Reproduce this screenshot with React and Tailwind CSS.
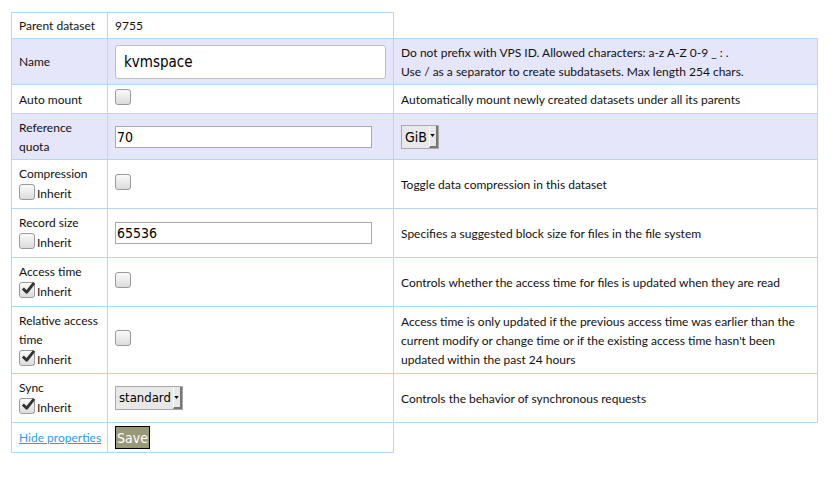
import React from 'react'

const inputFont = "font-['DejaVu_Sans_Condensed','DejaVu_Sans',sans-serif] [font-stretch:condensed]"

const Check = ({ checked, lift }) => (
  <span
    className={
      'inline-block relative w-[16px] h-[16px] rounded-[3px] border border-[#9a9a9a] bg-gradient-to-b from-[#fafafa] to-[#dcdcdc] align-middle' +
      (lift ? ' -top-[3px]' : '')
    }
  >
    {checked && (
      <svg viewBox="0 0 16 16" className="absolute left-[1px] -top-[2px] w-[15px] h-[15px]">
        <path d="M2 8 L6 12 L14 2" fill="none" stroke="#333" strokeWidth="3" strokeLinejoin="round" />
      </svg>
    )}
  </span>
)

const Inherit = ({ checked }) => (
  <div className="flex items-end gap-[2px] leading-[19px] mt-[1px] mb-[4px]">
    <Check checked={checked} />
    <span className="-mb-[3px]">Inherit</span>
  </div>
)

const Select = ({ value, size }) => (
  <span className={'inline-flex items-stretch h-[24px] border border-[#a8a8a8] bg-[#e8e8e8] text-black ' + inputFont + ' ' + size}>
    <span className="pl-[3px] pr-[2px] leading-[22px]">{value}</span>
    <span className="w-[9px] flex items-center justify-center border-l border-white border-r-2 border-r-[#777] border-b-2 border-b-[#777] bg-[#e8e8e8]">
      <svg viewBox="0 0 6 4" className="w-[5px] h-[3px]"><path d="M0 0 H6 L3 4 Z" fill="#111" /></svg>
    </span>
  </span>
)

const Row = ({ label, field, desc, lav, h, noDesc }) => (
  <tr className={lav ? 'bg-[#e6e6fa]' : ''} style={{ height: h }}>
    <td className="border border-[#b3d6fb] px-[7px] align-middle">{label}</td>
    <td className="border border-[#b3d6fb] px-[7px] align-middle">{field}</td>
    {noDesc ? null : <td className="border border-[#b3d6fb] px-[7px] align-middle">{desc}</td>}
  </tr>
)

export default function App() {
  return (
    <div className="bg-white w-[836px] h-[484px] pt-[12px] pl-[11px] font-['Lato',sans-serif] text-[12px] leading-[19px] text-[#111]">
      <table className="border-collapse table-fixed w-[806px]">
        <colgroup>
          <col style={{ width: 96 }} />
          <col style={{ width: 286 }} />
          <col style={{ width: 424 }} />
        </colgroup>
        <tbody>
          <Row h={26} label="Parent dataset" field="9755" noDesc />
          <Row
            h={46}
            lav
            label="Name"
            field={
              <input
                defaultValue="kvmspace"
                className={'w-[271px] h-[34px] rounded-[3px] border border-[#bdbdbd] bg-white px-[8px] text-[15px] text-black ' + inputFont}
              />
            }
            desc={
              <>
                Do not prefix with VPS ID. Allowed characters: a-z A-Z 0-9 _ : .<br />
                Use / as a separator to create subdatasets. Max length 254 chars.
              </>
            }
          />
          <Row h={29} label="Auto mount" field={<Check lift />} desc="Automatically mount newly created datasets under all its parents" />
          <Row
            h={46}
            lav
            label={<>Reference<br />quota</>}
            field={
              <input
                defaultValue="70"
                className={'w-[257px] h-[22px] border border-[#aaa] bg-white px-[1px] text-[14px] text-black ' + inputFont}
              />
            }
            desc={<Select value="GiB" size="text-[14px]" />}
          />
          <Row h={49} label={<><div>Compression</div><Inherit /></>} field={<Check lift />} desc="Toggle data compression in this dataset" />
          <Row
            h={49}
            label={<><div>Record size</div><Inherit /></>}
            field={
              <input
                defaultValue="65536"
                className={'w-[257px] h-[22px] border border-[#aaa] bg-white px-[1px] text-[14px] text-black ' + inputFont}
              />
            }
            desc="Specifies a suggested block size for files in the file system"
          />
          <Row h={49} label={<><div>Access time</div><Inherit checked /></>} field={<Check lift />} desc="Controls whether the access time for files is updated when they are read" />
          <Row
            h={67}
            label={<><div>Relative access time</div><Inherit checked /></>}
            field={<Check lift />}
            desc="Access time is only updated if the previous access time was earlier than the current modify or change time or if the existing access time hasn't been updated within the past 24 hours"
          />
          <Row h={49} label={<><div>Sync</div><Inherit checked /></>} field={<Select value="standard" size="text-[13px]" />} desc="Controls the behavior of synchronous requests" />
          <Row
            h={30}
            noDesc
            label={<a href="#" className="text-[#3399ee] underline whitespace-nowrap">Hide properties</a>}
            field={
              <button className={'h-[23px] px-[1px] border border-black bg-[#999978] text-white text-[14px] leading-[20px] align-middle ' + inputFont}>
                Save
              </button>
            }
          />
        </tbody>
      </table>
    </div>
  )
}
